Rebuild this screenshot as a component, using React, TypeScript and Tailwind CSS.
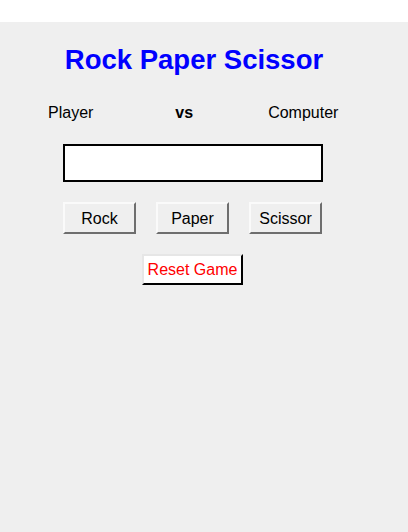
import React from "react";

export default function App() {
  const btn =
    "w-[73px] h-[32px] bg-[#efefef] text-[16px] leading-[18px] text-black border-2 border-t-[#fafafa] border-l-[#fafafa] border-r-[#6e6e6e] border-b-[#6e6e6e] flex items-center justify-center pt-[1px]";
  return (
    <div className="w-[408px] min-h-[532px] bg-white" style={{ fontFamily: '"Liberation Sans", Arial, sans-serif' }}>
      <div className="h-[22px] bg-white" />
      <div className="bg-[#efefef] h-[510px] flex flex-col">
        <div className="w-[385px] flex flex-col items-center">
          <h1 className="mt-[22px] text-[27.5px] leading-[32px] font-bold text-[#0000ff] pl-[3px]">Rock Paper Scissor</h1>
        </div>
        <div className="mt-[28px] flex text-[16px] leading-[18px] text-black">
          <span className="ml-[48px]">Player</span>
          <span className="ml-[82px] font-bold">vs</span>
          <span className="ml-[75px]">Computer</span>
        </div>
        <div className="w-[385px] flex flex-col items-center">
          <div className="mt-[22px] w-[260px] h-[38px] bg-white border-2 border-black" />
          <div className="mt-[20px] flex gap-[20px]">
            <button className={btn}>Rock</button>
            <button className={btn}>Paper</button>
            <button className={btn}>Scissor</button>
          </div>
          <button className="mt-[20px] w-[101px] h-[31px] bg-white text-[16px] leading-[18px] text-[#ff0000] border-2 border-t-[#e6e6e6] border-l-[#e6e6e6] border-r-black border-b-black flex items-center justify-center pt-[1px]">
            Reset Game
          </button>
        </div>
      </div>
    </div>
  );
}
